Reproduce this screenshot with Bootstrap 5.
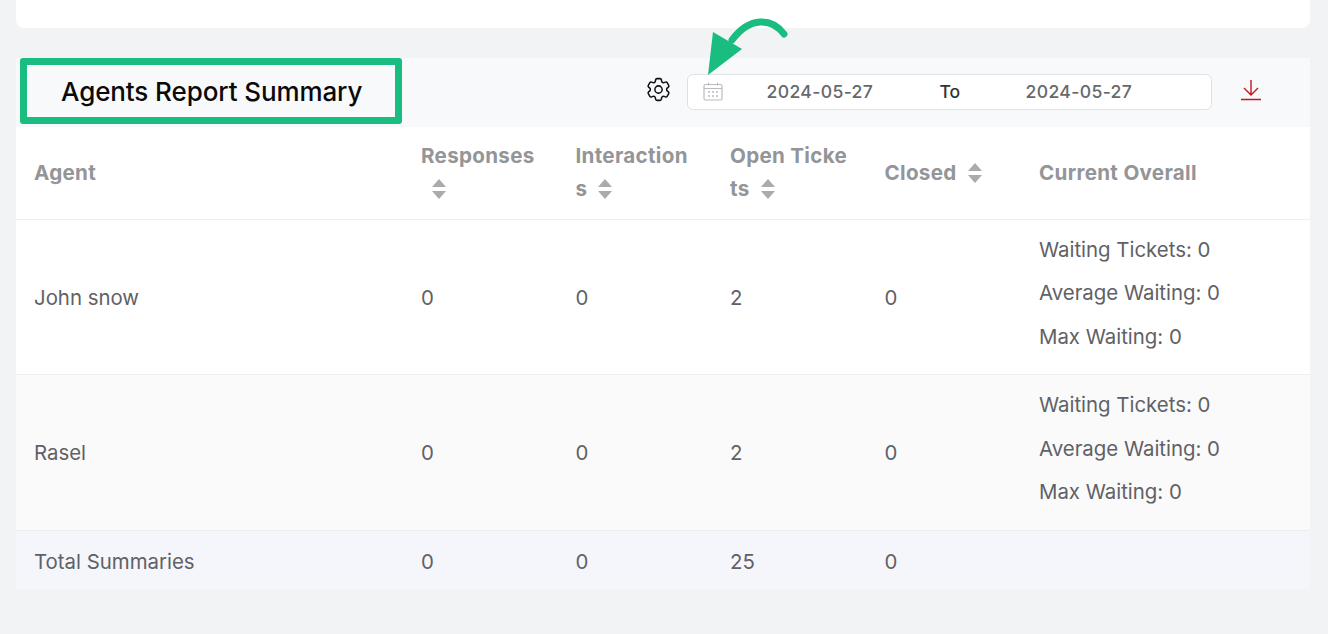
<!DOCTYPE html>
<html lang="en">
<head>
<meta charset="utf-8">
<title>Agents Report Summary</title>
<link href="https://cdn.jsdelivr.net/npm/bootstrap@5.3.0/dist/css/bootstrap.min.css" rel="stylesheet">
<style>
html,body{height:634px;overflow:hidden}
body{background:#f1f3f5;font-family:Inter,"Liberation Sans",sans-serif;color:#5f6166;padding:0 18px 0 16px;-webkit-font-smoothing:antialiased}
.top-panel{height:28px;background:#fff;border-radius:0 0 8px 8px;margin-bottom:30px}
.report-panel{position:relative;background:#fff}
.report-head{height:69px;background:#f8f9fb}
.title-box{width:382px;height:66px;margin-left:4px;border:7.5px solid #19bd80;border-radius:3px;padding-left:34px;font-size:26px;font-weight:500;color:#0a0a0a;line-height:53px;letter-spacing:-.1px;white-space:nowrap}
.gear-wrap{margin-left:242px;width:43px;margin-top:17px;line-height:0}
.date-box{width:525px;height:36px;margin-top:16px;border:1.5px solid #dfe1e4;border-radius:6px;background:#fff;font-size:17.6px;font-weight:500;letter-spacing:.35px;color:#66686c}
.date-box .cal{margin-left:14.5px;width:20px;flex:none;line-height:0;margin-top:-1px}
.date-box .d1{margin-left:44px;width:107px}
.date-box .to{margin-left:66px;width:20px;color:#333;letter-spacing:0}
.date-box .d2{margin-left:66px;width:108px}
.dl-wrap{margin-left:28px;margin-top:21px;line-height:0}
.report-table{table-layout:fixed;width:1294px;margin:0;font-size:20.4px;color:#5f6166;--bs-table-bg:transparent;--bs-table-color:#5f6166;border-collapse:collapse}
.report-table th,.report-table td{padding:0 18px;vertical-align:middle;border-bottom:1px solid #eceef0;border-top:0;box-shadow:none}
.report-table thead th{height:92px;font-weight:700;color:#939598;line-height:33px;font-size:20.6px;letter-spacing:.3px;word-break:break-all;padding-bottom:1px}
.report-table tbody td{padding-top:4px}
.report-table tbody tr.row-a td{height:155px}
.report-table tbody tr.row-b td{height:156px;background:#fafafa;padding-top:2px}
.report-table tbody tr.row-c td{height:59px;background:#f5f6fb;border-bottom:0;padding-top:6px}
.report-table tbody tr td.stat-cell{padding-top:0;padding-bottom:7px}
.stat-line{line-height:43.5px;white-space:nowrap}
.sorter{display:inline-block;vertical-align:-3px;margin-left:11px}
.sorter svg{display:block}
.arrow-note{position:absolute;left:690px;top:-44px;pointer-events:none}
</style>
</head>
<body>
<div class="top-panel"></div>
<div class="report-panel">
  <div class="report-head d-flex align-items-start">
    <div class="title-box">Agents Report Summary</div>
    <div class="gear-wrap">
      <svg width="29" height="29" viewBox="0 0 24 24" fill="none" stroke="#111" stroke-width="1.25" stroke-linejoin="round"><path d="M9.594 3.94c.09-.542.56-.94 1.11-.94h2.593c.55 0 1.02.398 1.11.94l.213 1.281c.063.374.313.686.645.87.074.04.147.083.22.127.324.196.72.257 1.075.124l1.217-.456a1.125 1.125 0 011.37.49l1.296 2.247a1.125 1.125 0 01-.26 1.431l-1.003.827c-.293.24-.438.613-.431.992a6.759 6.759 0 010 .255c-.007.378.138.75.43.99l1.005.828c.424.35.534.954.26 1.43l-1.298 2.247a1.125 1.125 0 01-1.369.491l-1.217-.456c-.355-.133-.75-.072-1.076.124a6.57 6.57 0 01-.22.128c-.331.183-.581.495-.644.869l-.213 1.28c-.09.543-.56.941-1.11.941h-2.594c-.55 0-1.02-.398-1.11-.94l-.213-1.281c-.062-.374-.312-.686-.644-.87a6.52 6.52 0 01-.22-.127c-.325-.196-.72-.257-1.076-.124l-1.217.456a1.125 1.125 0 01-1.369-.49l-1.297-2.247a1.125 1.125 0 01.26-1.431l1.004-.827c.292-.24.437-.613.43-.992a6.932 6.932 0 010-.255c.007-.378-.138-.75-.43-.99l-1.004-.828a1.125 1.125 0 01-.26-1.43l1.297-2.247a1.125 1.125 0 011.37-.491l1.216.456c.356.133.751.072 1.076-.124.072-.044.146-.087.22-.128.332-.183.582-.495.644-.869l.214-1.281z"/><circle cx="12" cy="12" r="3"/></svg>
    </div>
    <div class="date-box d-flex align-items-center">
      <span class="cal"><svg width="20" height="19" viewBox="0 0 20 19" fill="none" stroke="#b9bbbe" stroke-width="1.2"><rect x="1" y="2.500" width="18" height="15.500" rx="1.500"/><path d="M1 6.500h18M5.500 0.500v3M14.500 0.500v3"/><path d="M5 10h2M9 10h2M13 10h2M5 14h2M9 14h2M13 14h2" stroke-width="1.600"/></svg></span>
      <span class="d1">2024-05-27</span>
      <span class="to">To</span>
      <span class="d2">2024-05-27</span>
    </div>
    <div class="dl-wrap">
      <svg width="22" height="22" viewBox="0 0 22 22" fill="none" stroke="#c5161d" stroke-width="1.400"><path d="M11 1v15M4 9l7 7 7-7M1 20.500h20"/></svg>
    </div>
  </div>
  <table class="table report-table">
    <colgroup><col style="width:387px"><col style="width:154.5px"><col style="width:154.5px"><col style="width:154.5px"><col style="width:154.5px"><col style="width:289px"></colgroup>
    <thead>
      <tr>
        <th>Agent</th>
        <th>Responses<span class="sorter"><svg width="14" height="20" viewBox="0 0 14 20" fill="#a9abae"><path d="M7 0l7 8H0zM7 20l7-8H0z"/></svg></span></th>
        <th>Interactions<span class="sorter"><svg width="14" height="20" viewBox="0 0 14 20" fill="#a9abae"><path d="M7 0l7 8H0zM7 20l7-8H0z"/></svg></span></th>
        <th>Open Tickets<span class="sorter"><svg width="14" height="20" viewBox="0 0 14 20" fill="#a9abae"><path d="M7 0l7 8H0zM7 20l7-8H0z"/></svg></span></th>
        <th>Closed<span class="sorter"><svg width="14" height="20" viewBox="0 0 14 20" fill="#a9abae"><path d="M7 0l7 8H0zM7 20l7-8H0z"/></svg></span></th>
        <th>Current Overall</th>
      </tr>
    </thead>
    <tbody>
      <tr class="row-a">
        <td>John snow</td><td>0</td><td>0</td><td>2</td><td>0</td>
        <td class="stat-cell"><div class="stat-line">Waiting Tickets: 0</div><div class="stat-line">Average Waiting: 0</div><div class="stat-line">Max Waiting: 0</div></td>
      </tr>
      <tr class="row-b">
        <td>Rasel</td><td>0</td><td>0</td><td>2</td><td>0</td>
        <td class="stat-cell"><div class="stat-line">Waiting Tickets: 0</div><div class="stat-line">Average Waiting: 0</div><div class="stat-line">Max Waiting: 0</div></td>
      </tr>
      <tr class="row-c">
        <td>Total Summaries</td><td>0</td><td>0</td><td>25</td><td>0</td><td></td>
      </tr>
    </tbody>
  </table>
  <svg class="arrow-note" width="105" height="80" viewBox="0 0 105 80">
    <path d="M78 20 C66 4 44 2 26 26" fill="none" stroke="#19bd80" stroke-width="7" stroke-linecap="round"/>
    <path d="M7 18 L36 35 L2 61 Z" fill="#19bd80"/>
  </svg>
</div>
<script src="https://cdn.jsdelivr.net/npm/bootstrap@5.3.0/dist/js/bootstrap.bundle.min.js"></script>
</body>
</html>
